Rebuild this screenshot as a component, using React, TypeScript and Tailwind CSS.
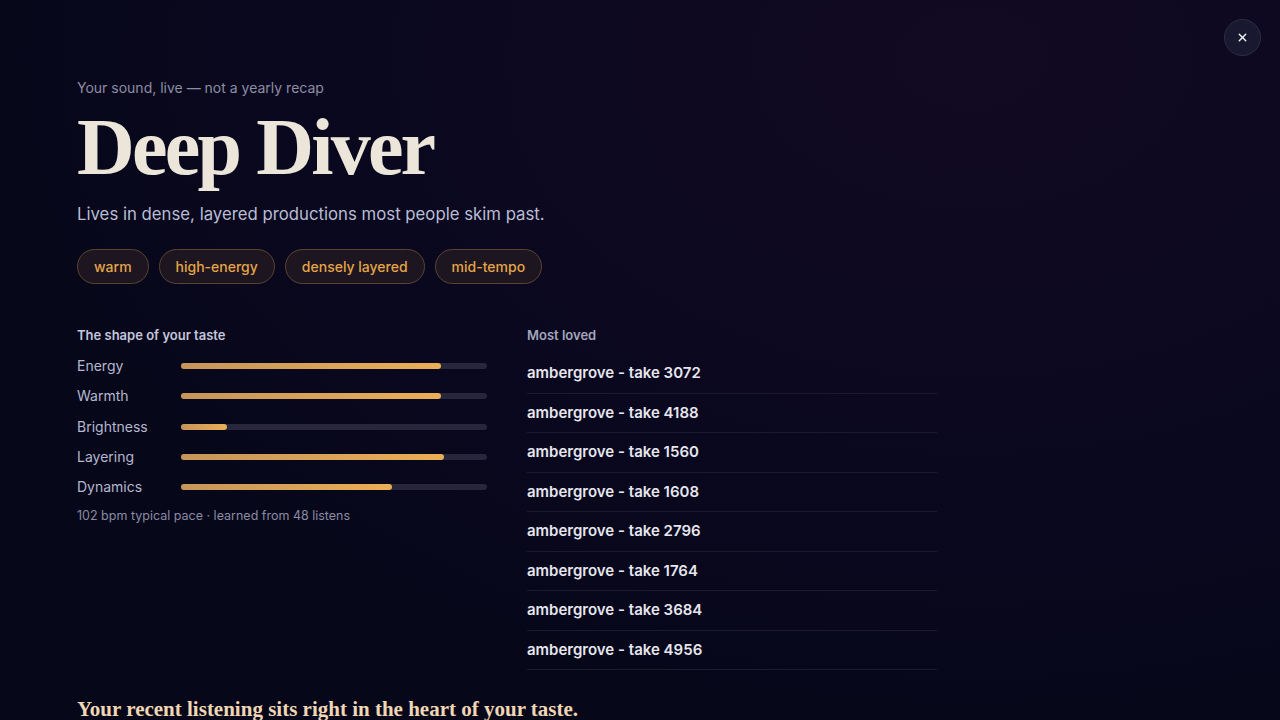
import { X } from "lucide-react";

const traits = [
  { label: "Energy", value: 85 },
  { label: "Warmth", value: 85 },
  { label: "Brightness", value: 15 },
  { label: "Layering", value: 86 },
  { label: "Dynamics", value: 69 },
];

const tags = ["warm", "high-energy", "densely layered", "mid-tempo"];

const loved = [3072, 4188, 1560, 1608, 2796, 1764, 3684, 4956];

export default function App() {
  return (
    <div className="relative h-[720px] overflow-hidden bg-[#07071a] bg-[radial-gradient(ellipse_at_76%_8%,#120a22_0%,#0b0820_35%,#07071a_70%)] font-['Inter','Noto_Sans',sans-serif]">
      <button className="absolute right-[19px] top-[19px] flex h-[37px] w-[37px] items-center justify-center rounded-full border border-[#2c2c44] bg-[#181830] text-[#f2f2f6]">
        <X size={13} strokeWidth={2.5} />
      </button>

      <main className="pl-[77px] pt-[78px]">
        <p className="text-sm leading-5 text-[#8d8ea6]">Your sound, live — not a yearly recap</p>
        <h1 className="mt-[9px] font-['Liberation_Serif',serif] text-[80px] font-bold leading-none tracking-[-0.035em] text-[#ece6da]">
          Deep Diver
        </h1>
        <p className="mt-[14px] text-[16.75px] leading-[26px] text-[#b9bdd6]">
          Lives in dense, layered productions most people skim past.
        </p>

        <div className="mt-[22px] flex gap-[10px]">
          {tags.map((t) => (
            <span
              key={t}
              className="flex h-[35px] items-center rounded-full border border-[#5a4430] bg-[#1d1620] px-4 text-sm font-medium text-[#e4a448]"
            >
              {t}
            </span>
          ))}
        </div>

        <div className="mt-[42px] grid w-[860px] grid-cols-2 gap-10">
          <section>
            <h2 className="text-[13px] font-semibold leading-[18px] text-[#c3c6dc]">The shape of your taste</h2>
            <div className="mt-[7px]">
              {traits.map((t) => (
                <div key={t.label} className="flex h-[30.25px] items-center">
                  <span className="w-[104px] text-sm text-[#b4b8d0]">{t.label}</span>
                  <div className="h-[6px] flex-1 rounded-full bg-[#27263a]">
                    <div
                      className="h-full rounded-full bg-gradient-to-r from-[#c6955a] to-[#eaae55]"
                      style={{ width: `${t.value}%` }}
                    />
                  </div>
                </div>
              ))}
            </div>
            <p className="mt-[6px] text-[12.5px] leading-4 text-[#8a8ca4]">102 bpm typical pace · learned from 48 listens</p>
          </section>

          <section>
            <h2 className="text-[13px] font-semibold leading-[18px] text-[#a3a6be]">Most loved</h2>
            <ul className="mt-[10px]">
              {loved.map((n) => (
                <li
                  key={n}
                  className="flex h-[39.5px] items-center border-b border-[#1c1b2e] text-[15px] font-semibold text-[#e6e6ee]"
                >
                  ambergrove - take {n}
                </li>
              ))}
            </ul>
          </section>
        </div>

        <p className="mt-[25px] font-['Liberation_Serif',serif] text-[21px] font-bold leading-7 text-[#f0d6b4]">
          Your recent listening sits right in the heart of your taste.
        </p>
      </main>
    </div>
  );
}
